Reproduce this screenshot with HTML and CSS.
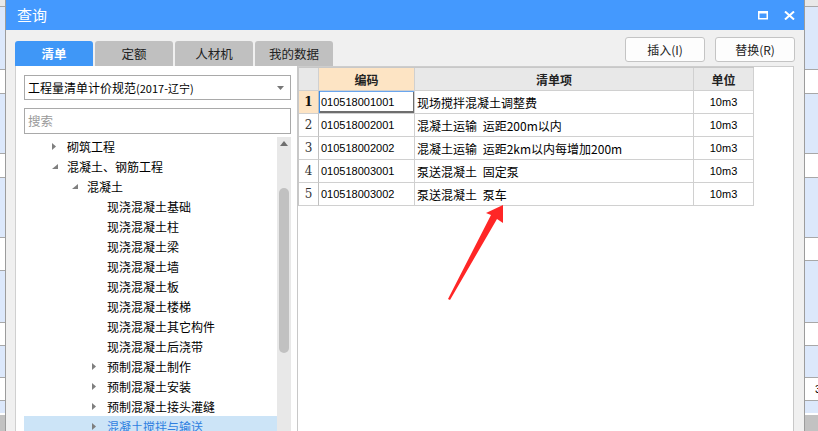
FILE: index.html
```html
<!DOCTYPE html>
<html lang="zh-CN">
<head>
<meta charset="utf-8">
<title>查询</title>
<link rel="stylesheet" href="styles.css">
</head>
<body>
<div class="screen">
  <div class="edge edge-left">
    <div class="s top"></div><div class="s line"></div>
    <div class="s blue" style="height:62px"></div><div class="s line"></div>
    <div class="s white" style="height:23px"></div><div class="s line"></div>
    <div class="s blue" style="height:59px"></div><div class="s line"></div>
    <div class="s white" style="height:23px"></div><div class="s line"></div>
    <div class="s blue" style="height:59px"></div><div class="s line"></div>
    <div class="s white" style="height:32px"></div><div class="s line"></div>
    <div class="s blue" style="height:51px"></div><div class="s line"></div>
    <div class="s white" style="height:22px"></div><div class="s line"></div>
    <div class="s blue" style="height:31px"></div><div class="s line"></div>
    <div class="s white" style="height:22px"></div><div class="s line"></div>
    <div class="s blue" style="height:12px"></div>
    <div class="s gray"></div>
  </div>

  <div class="dialog">
    <div class="titlebar">
      <span class="title">查询</span>
      <div class="win-btns">
        <svg class="win-icon" width="10" height="9" viewBox="0 0 10 9"><rect x="0.75" y="1" width="8.5" height="6.75" fill="none" stroke="#fff" stroke-width="1.5"/><rect x="0" y="0" width="10" height="2.5" fill="#fff"/></svg>
        <svg class="win-icon" width="11" height="9" viewBox="0 0 11 9"><path d="M1 0.5 L10 8.5 M10 0.5 L1 8.5" stroke="#fff" stroke-width="2" fill="none"/></svg>
      </div>
    </div>
    <div class="dbody">
      <div class="toolbar">
        <div class="tabs">
          <div class="tab active">清单</div>
          <div class="tab">定额</div>
          <div class="tab">人材机</div>
          <div class="tab">我的数据</div>
        </div>
        <div class="actions">
          <button class="btn">插入(I)</button>
          <button class="btn">替换(R)</button>
        </div>
      </div>
      <div class="panels">
        <div class="left-panel">
          <div class="select">
            <span class="select-text">工程量清单计价规范<span class="small">(2017-辽宁)</span></span>
            <svg width="7" height="4" viewBox="0 0 7 4"><path d="M0 0 H7 L3.5 4 Z" fill="#777"/></svg>
          </div>
          <div class="search">搜索</div>
          <div class="tree-wrap">
            <div class="tree">
              <div class="row l1"><span class="tw"><svg width="4" height="7" viewBox="0 0 4 7"><path d="M0 0 L4 3.5 L0 7 Z" fill="#7f7f7f"/></svg></span>砌筑工程</div>
              <div class="row l1"><span class="tw"><svg width="6" height="5" viewBox="0 0 6 5"><path d="M6 0 V5 H0 Z" fill="#7f7f7f"/></svg></span>混凝土、钢筋工程</div>
              <div class="row l2"><span class="tw"><svg width="6" height="5" viewBox="0 0 6 5"><path d="M6 0 V5 H0 Z" fill="#7f7f7f"/></svg></span>混凝土</div>
              <div class="row l3"><span class="tw"></span>现浇混凝土基础</div>
              <div class="row l3"><span class="tw"></span>现浇混凝土柱</div>
              <div class="row l3"><span class="tw"></span>现浇混凝土梁</div>
              <div class="row l3"><span class="tw"></span>现浇混凝土墙</div>
              <div class="row l3"><span class="tw"></span>现浇混凝土板</div>
              <div class="row l3"><span class="tw"></span>现浇混凝土楼梯</div>
              <div class="row l3"><span class="tw"></span>现浇混凝土其它构件</div>
              <div class="row l3"><span class="tw"></span>现浇混凝土后浇带</div>
              <div class="row l3"><span class="tw"><svg width="4" height="7" viewBox="0 0 4 7"><path d="M0 0 L4 3.5 L0 7 Z" fill="#7f7f7f"/></svg></span>预制混凝土制作</div>
              <div class="row l3"><span class="tw"><svg width="4" height="7" viewBox="0 0 4 7"><path d="M0 0 L4 3.5 L0 7 Z" fill="#7f7f7f"/></svg></span>预制混凝土安装</div>
              <div class="row l3"><span class="tw"><svg width="4" height="7" viewBox="0 0 4 7"><path d="M0 0 L4 3.5 L0 7 Z" fill="#7f7f7f"/></svg></span>预制混凝土接头灌缝</div>
              <div class="row l3 selected"><span class="tw"><svg width="4" height="7" viewBox="0 0 4 7"><path d="M0 0 L4 3.5 L0 7 Z" fill="#7f7f7f"/></svg></span>混凝土搅拌与输送</div>
            </div>
            <div class="scrollbar">
              <svg class="sb-up" width="8" height="5" viewBox="0 0 8 5"><path d="M0 5 L4 0 L8 5 Z" fill="#6f6f6f"/></svg>
              <div class="sb-thumb"></div>
            </div>
          </div>
        </div>

        <div class="right-panel">
          <div class="grid">
            <div class="c hd"></div>
            <div class="c hd hd-sel">编码</div>
            <div class="c hd">清单项</div>
            <div class="c hd">单位</div>

            <div class="c num num-sel">1</div>
            <div class="c code focus">010518001001</div>
            <div class="c item">现场搅拌混凝土调整费</div>
            <div class="c unit">10m3</div>

            <div class="c num">2</div>
            <div class="c code">010518002001</div>
            <div class="c item">混凝土运输 运距200m以内</div>
            <div class="c unit">10m3</div>

            <div class="c num">3</div>
            <div class="c code">010518002002</div>
            <div class="c item">混凝土运输 运距2km以内每增加200m</div>
            <div class="c unit">10m3</div>

            <div class="c num">4</div>
            <div class="c code">010518003001</div>
            <div class="c item">泵送混凝土 固定泵</div>
            <div class="c unit">10m3</div>

            <div class="c num">5</div>
            <div class="c code">010518003002</div>
            <div class="c item">泵送混凝土 泵车</div>
            <div class="c unit">10m3</div>
          </div>
        </div>
      </div>
    </div>
  </div>

  <div class="edge edge-right">
    <div class="s top"></div><div class="s line"></div>
    <div class="s blue" style="height:62px"></div><div class="s line"></div>
    <div class="s white" style="height:23px"></div><div class="s line"></div>
    <div class="s blue" style="height:59px"></div><div class="s line"></div>
    <div class="s white" style="height:23px"></div><div class="s line"></div>
    <div class="s blue" style="height:59px"></div><div class="s line"></div>
    <div class="s white" style="height:22px"></div><div class="s line"></div>
    <div class="s blue" style="height:61px"></div><div class="s line"></div>
    <div class="s white" style="height:22px"></div><div class="s line"></div>
    <div class="s blue" style="height:31px"></div><div class="s line"></div>
    <div class="s white edge-text" style="height:22px">3</div><div class="s line"></div>
    <div class="s blue" style="height:12px"></div>
    <div class="s gray"></div>
  </div>

  <svg class="annotation" width="818" height="431" viewBox="0 0 818 431">
    <polygon points="503,205 503,223 497,219 450,300 448,299 491,215 486,213" fill="#ff2626"/>
  </svg>
</div>
</body>
</html>
```

FILE: styles.css
```css
* { box-sizing: border-box; }

html, body {
  margin: 0;
  padding: 0;
  width: 818px;
  height: 431px;
  overflow: hidden;
  background: #ffffff;
}

body {
  font-family: "Noto Sans CJK SC", "Liberation Sans", sans-serif;
  font-size: 12px;
  color: #000;
}

.screen {
  position: relative;
  display: flex;
  width: 818px;
  height: 431px;
  overflow: hidden;
}

/* background window strips */
.edge {
  display: flex;
  flex-direction: column;
  flex: none;
  overflow: hidden;
}
.edge-left { width: 5px; }
.edge-right { width: 13px; }
.s { flex: none; }
.s.top { height: 6px; background: #e9e9e9; }
.s.line { height: 1px; background: #a8a8a8; }
.s.blue { background: #dce8fb; }
.s.white { background: #ffffff; }
.s.gray { flex: 1; background: #c2c2c2; border-top: 2px solid #ffffff; }
.edge-text {
  font-family: "Liberation Sans", sans-serif;
  font-size: 11px;
  line-height: 22px;
  padding-left: 10px;
}

/* dialog */
.dialog {
  flex: none;
  width: 800px;
  height: 431px;
  display: flex;
  flex-direction: column;
  border-left: 1px solid #9c9c9c;
  border-right: 1px solid #9c9c9c;
  background: #f0f0f0;
}

.titlebar {
  flex: none;
  height: 30px;
  background: #4499fe;
  display: flex;
  align-items: center;
  justify-content: space-between;
  padding: 0 9px 0 11px;
}
.title {
  color: #fff;
  font-size: 15px;
  line-height: 30px;
}
.win-btns {
  display: flex;
  align-items: center;
  gap: 16px;
  padding-top: 1px;
}
.win-icon { display: block; }

.dbody {
  flex: 1;
  display: flex;
  flex-direction: column;
  padding: 7px 9px 0 9px;
  min-height: 0;
}

.toolbar {
  flex: none;
  display: flex;
  justify-content: space-between;
  align-items: flex-start;
}
.tabs {
  display: flex;
  gap: 2px;
  margin-top: 4px;
}
.tab {
  width: 78px;
  height: 25px;
  line-height: 25px;
  text-align: center;
  background: #c0c0c0;
  color: #222;
  font-size: 12.5px;
  border-radius: 3px 3px 0 0;
}
.tab.active {
  background: #3f97f7;
  color: #fff;
  font-weight: bold;
}
.actions {
  display: flex;
  gap: 10px;
}
.btn {
  width: 80px;
  height: 25px;
  background: #fdfdfd;
  border: 1px solid #c4c4c4;
  border-radius: 3px;
  font-family: "Noto Sans CJK SC", "Liberation Sans", sans-serif;
  font-size: 12px;
  color: #222;
  padding: 0;
}

.panels {
  flex: 1;
  display: flex;
  min-height: 0;
}

/* left panel */
.left-panel {
  flex: none;
  width: 282px;
  background: #fff;
  border-left: 1px solid #d0d0d0;
  padding: 9px 6px 0 8px;
  display: flex;
  flex-direction: column;
}
.select {
  height: 25px;
  border: 1px solid #a9a9a9;
  display: flex;
  align-items: center;
  justify-content: space-between;
  padding: 0 6px 0 3px;
  font-size: 12px;
  flex: none;
}
.select .small { font-size: 11px; }
.search {
  flex: none;
  margin-top: 8px;
  height: 26px;
  border: 1px solid #a9a9a9;
  color: #9a9a9a;
  font-size: 12.5px;
  line-height: 24px;
  padding-left: 3px;
}
.tree-wrap {
  flex: 1;
  display: flex;
  margin-top: 2px;
  min-height: 0;
}
.tree {
  width: 253px;
  flex: none;
}
.row {
  height: 20px;
  display: flex;
  align-items: center;
  white-space: nowrap;
  font-size: 12px;
}
.row.l1 { padding-left: 28px; }
.row.l2 { padding-left: 48px; }
.row.l3 { padding-left: 68px; }
.tw {
  width: 15px;
  flex: none;
  display: flex;
  align-items: center;
}
.tw svg { display: block; }
.row.selected {
  background: #cce4f7;
  color: #2f7fe0;
}

.scrollbar {
  width: 14px;
  flex: none;
  background: #e8e8e8;
  display: flex;
  flex-direction: column;
  align-items: center;
  padding-top: 4px;
  margin-top: 1px;
}
.sb-up { display: block; }
.sb-thumb {
  margin-top: 42px;
  width: 10px;
  height: 165px;
  border-radius: 5px;
  background: #c1c1c1;
}

/* right panel */
.right-panel {
  flex: 1;
  background: #fff;
  border-left: 1px solid #c8c8c8;
  border-right: 1px solid #c8c8c8;
  border-top: 1px solid #cdcdcd;
  margin-right: 1px;
}
.grid {
  display: grid;
  grid-template-columns: 20px 96px 279px 60px;
  grid-auto-rows: 23px;
  width: 456px;
  border-left: 1px solid #c8c8c8;
  border-top: 1px solid #c8c8c8;
}
.c {
  border-right: 1px solid #d0d0d0;
  border-bottom: 1px solid #d0d0d0;
  display: flex;
  align-items: center;
  white-space: nowrap;
  overflow: hidden;
  font-size: 12px;
}
.hd {
  background: #e8e8e8;
  justify-content: center;
  font-weight: bold;
  color: #222;
}
.hd-sel { background: #fde4c4; }
.num {
  justify-content: center;
  font-family: "DejaVu Serif", "Liberation Serif", serif;
  font-size: 12px;
  color: #333;
  border-right-color: #c0c0c0;
}
.num-sel { background: #fde4c4; font-weight: bold; color: #111; }
.code {
  font-family: "Liberation Sans", sans-serif;
  font-size: 11px;
  padding-left: 2px;
}
.code.focus {
  box-shadow: inset 1px 0 0 #3b8de8, inset 0 1px 0 #6aa6ee, inset 0 -2px 0 #6e6e6e, inset -1px 0 0 #6e6e6e;
}
.item { padding-left: 2px; word-spacing: 3px; }
.unit {
  justify-content: center;
  font-family: "Liberation Sans", sans-serif;
  font-size: 11px;
}

/* annotation arrow overlay */
.annotation {
  position: absolute;
  left: 0;
  top: 0;
  pointer-events: none;
}
```
